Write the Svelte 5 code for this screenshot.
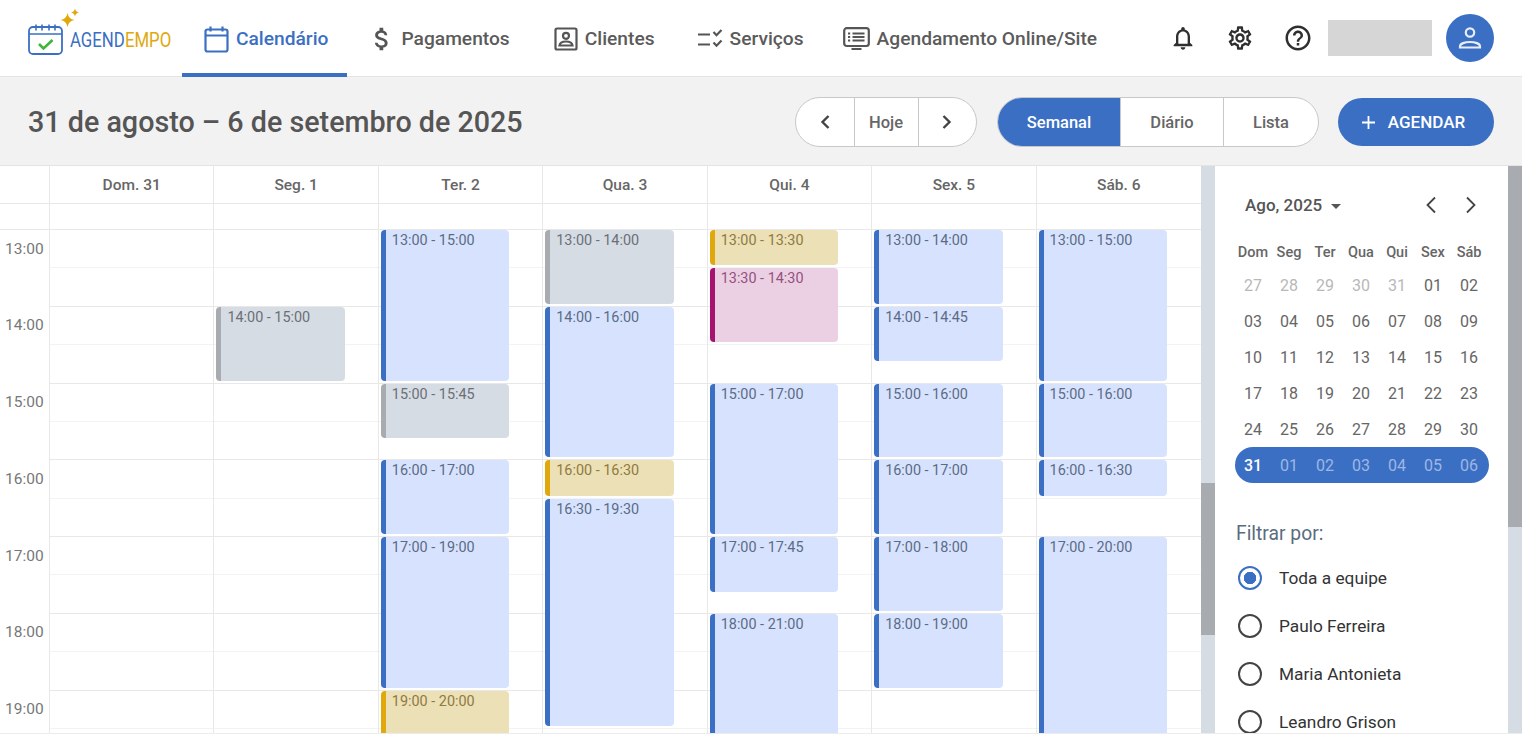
<script>
  const HOUR = 76.75

  const tabs = [
    { label: 'Calendário', icon: 'cal', w: 25, active: true },
    { label: 'Pagamentos', icon: 'money', w: 22 },
    { label: 'Clientes', icon: 'client', w: 24 },
    { label: 'Serviços', icon: 'check', w: 26 },
    { label: 'Agendamento Online/Site', icon: 'screen', w: 27 }
  ]

  const hours = [13, 14, 15, 16, 17, 18, 19]

  const days = [
    { title: 'Dom. 31', events: [] },
    { title: 'Seg. 1', events: [['14:00', '15:00', 'gray']] },
    { title: 'Ter. 2', events: [['13:00', '15:00', 'blue'], ['15:00', '15:45', 'gray'], ['16:00', '17:00', 'blue'], ['17:00', '19:00', 'blue'], ['19:00', '20:00', 'yellow']] },
    { title: 'Qua. 3', events: [['13:00', '14:00', 'gray'], ['14:00', '16:00', 'blue'], ['16:00', '16:30', 'yellow'], ['16:30', '19:30', 'blue']] },
    { title: 'Qui. 4', events: [['13:00', '13:30', 'yellow'], ['13:30', '14:30', 'pink'], ['15:00', '17:00', 'blue'], ['17:00', '17:45', 'blue'], ['18:00', '21:00', 'blue']] },
    { title: 'Sex. 5', events: [['13:00', '14:00', 'blue'], ['14:00', '14:45', 'blue'], ['15:00', '16:00', 'blue'], ['16:00', '17:00', 'blue'], ['17:00', '18:00', 'blue'], ['18:00', '19:00', 'blue']] },
    { title: 'Sáb. 6', events: [['13:00', '15:00', 'blue'], ['15:00', '16:00', 'blue'], ['16:00', '16:30', 'blue'], ['17:00', '20:00', 'blue']] }
  ]

  const toHours = (t) => {
    const [h, m] = t.split(':').map(Number)
    return h + m / 60
  }
  const topOf = (e) => (toHours(e[0]) - 13) * HOUR + 26
  const heightOf = (e) => (toHours(e[1]) - toHours(e[0])) * HOUR - 3

  const weekNames = ['Dom', 'Seg', 'Ter', 'Qua', 'Qui', 'Sex', 'Sáb']
  const weeks = [
    ['27', '28', '29', '30', '31', '01', '02'],
    ['03', '04', '05', '06', '07', '08', '09'],
    ['10', '11', '12', '13', '14', '15', '16'],
    ['17', '18', '19', '20', '21', '22', '23'],
    ['24', '25', '26', '27', '28', '29', '30']
  ]
  const currentWeek = ['31', '01', '02', '03', '04', '05', '06']

  const team = ['Toda a equipe', 'Paulo Ferreira', 'Maria Antonieta', 'Leandro Grison']
</script>

<div class="page">
  <header class="topbar">
    <div class="logo">
      <svg class="logo-mark" width="36" height="34" viewBox="0 0 36 34" fill="none">
        <rect x="1" y="5" width="33" height="27" rx="4" stroke="#3b6fc4" stroke-width="1.8" />
        <path d="M1 12h33M8 2.5v6M14 2.5v6M21 2.5v6M27 2.5v6" stroke="#3b6fc4" stroke-width="1.6" />
        <path d="M11 22l4.5 4.5 9-8.5" stroke="#3fb53c" stroke-width="2.6" />
      </svg>
      <svg class="sparkles" width="22" height="20" viewBox="0 0 22 20" fill="#e0a80c">
        <path d="M9.500 5Q10.500 11 16.500 12 10.500 13 9.500 19 8.500 13 2.500 12 8.500 11 9.500 5z" />
        <path d="M17 .5Q17.600 3.900 21 4.500 17.600 5.100 17 8.500 16.400 5.100 13 4.500 16.400 3.900 17 .5z" />
      </svg>
      <span class="logo-text"><span class="logo-a">AGEND</span><span class="logo-b">EMPO</span></span>
    </div>

    <nav class="tabs">
      {#each tabs as tab}
        <div class="tab" class:active={tab.active}>
          <span class="tab-icon" style="width:{tab.w}px">
            {#if tab.icon === 'cal'}
              <svg width="25" height="27" viewBox="0 0 25 27" fill="none" stroke="#3b6fc4" stroke-width="2.200">
                <rect x="1.500" y="3.500" width="22" height="22" rx="2" />
                <path d="M1.500 9.500h22M6.500 0.500v5M18.500 0.500v5" />
              </svg>
            {:else if tab.icon === 'money'}
              <svg class="dollar" width="30" height="30" viewBox="0 0 24 24" fill="#555"><path d="M11.800 10.900c-2.270-.59-3-1.200-3-2.150 0-1.090 1.010-1.850 2.700-1.850 1.780 0 2.440.85 2.500 2.100h2.210c-.07-1.720-1.120-3.300-3.210-3.810V3h-3v2.160c-1.940.42-3.500 1.680-3.500 3.610 0 2.310 1.910 3.460 4.700 4.130 2.500.6 3 1.480 3 2.410 0 .69-.49 1.790-2.700 1.790-2.060 0-2.870-.92-2.980-2.100h-2.200c.12 2.190 1.760 3.420 3.680 3.830V21h3v-2.150c1.950-.37 3.500-1.500 3.500-3.550 0-2.840-2.430-3.810-4.700-4.400z" /></svg>
            {:else if tab.icon === 'client'}
              <svg width="24" height="24" viewBox="0 0 24 24" fill="none" stroke="#555" stroke-width="2.200">
                <rect x="1.500" y="1.500" width="21" height="21" rx="1.500" />
                <circle cx="12" cy="8.800" r="3" />
                <path d="M5.500 18.500c.4-3 3.200-4 6.500-4s6.100 1 6.500 4z" />
              </svg>
            {:else if tab.icon === 'check'}
              <svg width="26" height="20" viewBox="0 0 26 20" fill="none" stroke="#555" stroke-width="2.200">
                <path d="M1 5.500h12M1 15.500h12M16.500 3l3 3.200 5-5.200M16.500 13.500l3 3.200 5-5.200" />
              </svg>
            {:else}
              <svg width="27" height="24" viewBox="0 0 27 24" fill="none" stroke="#555" stroke-width="2.200">
                <rect x="1.200" y="1.200" width="24.600" height="17.800" rx="2.500" />
                <path d="M9.500 6.500h12M9.500 10h12M9.500 13.500h12M5 6.500h2.200M5 10h2.200M5 13.500h2.200M8.500 22h10" />
              </svg>
            {/if}
          </span>
          <span>{tab.label}</span>
        </div>
      {/each}
    </nav>

    <div class="actions">
      <svg class="action" width="28" height="28" viewBox="0 0 24 24" fill="#2f2f2f"><path d="M12 22c1.100 0 2-.9 2-2h-4c0 1.100.9 2 2 2zm6-6v-5c0-3.070-1.630-5.640-4.500-6.320V4c0-.83-.67-1.500-1.500-1.500s-1.500.67-1.500 1.500v.68C7.640 5.360 6 7.920 6 11v5l-2 2v1h16v-1l-2-2zm-2 1H8v-6c0-2.480 1.510-4.500 4-4.500s4 2.020 4 4.500v6z" /></svg>
      <svg class="action" width="28" height="28" viewBox="0 0 24 24" fill="#2f2f2f"><path d="M19.430 12.980c.04-.32.07-.64.07-.98 0-.34-.03-.66-.07-.98l2.110-1.650c.19-.15.24-.42.12-.64l-2-3.460c-.09-.16-.26-.25-.44-.25-.06 0-.12.01-.17.03l-2.490 1c-.52-.4-1.080-.73-1.690-.98l-.38-2.650C14.460 2.180 14.250 2 14 2h-4c-.25 0-.46.18-.49.42l-.38 2.650c-.61.25-1.170.59-1.690.98l-2.490-1c-.06-.02-.12-.03-.18-.03-.17 0-.34.09-.43.25l-2 3.460c-.13.22-.07.49.12.64l2.110 1.650c-.04.32-.07.65-.07.98 0 .33.03.66.07.98l-2.110 1.650c-.19.15-.24.42-.12.64l2 3.460c.09.16.26.25.44.25.06 0 .12-.01.17-.03l2.490-1c.52.4 1.080.73 1.690.98l.38 2.650c.03.24.24.42.49.42h4c.25 0 .46-.18.49-.42l.38-2.650c.61-.25 1.170-.59 1.690-.98l2.490 1c.06.02.12.03.18.03.17 0 .34-.09.43-.25l2-3.460c.12-.22.07-.49-.12-.64l-2.110-1.650zm-1.980-1.710c.04.31.05.52.05.73 0 .21-.02.43-.05.73l-.14 1.130.89.7 1.080.84-.7 1.210-1.270-.51-1.040-.42-.9.68c-.43.32-.84.56-1.250.73l-1.060.43-.16 1.130-.2 1.350h-1.400l-.19-1.350-.16-1.130-1.060-.43c-.43-.18-.83-.41-1.230-.71l-.91-.7-1.060.43-1.270.51-.7-1.210 1.080-.84.89-.7-.14-1.130c-.03-.31-.05-.54-.05-.74s.02-.43.05-.73l.14-1.130-.89-.7-1.080-.84.7-1.210 1.270.51 1.040.42.9-.68c.43-.32.84-.56 1.250-.73l1.060-.43.16-1.130.2-1.350h1.390l.19 1.350.16 1.130 1.060.43c.43.18.83.41 1.230.71l.91.7 1.060-.43 1.270-.51.7 1.210-1.070.85-.89.7.14 1.130zM12 8c-2.210 0-4 1.790-4 4s1.790 4 4 4 4-1.790 4-4-1.790-4-4-4zm0 6c-1.100 0-2-.9-2-2s.9-2 2-2 2 .9 2 2-.9 2-2 2z" /></svg>
      <svg class="action" width="30" height="30" viewBox="0 0 24 24" fill="#2f2f2f"><path d="M11 18h2v-2h-2v2zm1-16C6.480 2 2 6.480 2 12s4.480 10 10 10 10-4.480 10-10S17.520 2 12 2zm0 18c-4.410 0-8-3.590-8-8s3.590-8 8-8 8 3.590 8 8-3.590 8-8 8zm0-14c-2.210 0-4 1.790-4 4h2c0-1.100.9-2 2-2s2 .9 2 2c0 2-3 1.750-3 5h2c0-2.250 3-2.500 3-5 0-2.210-1.790-4-4-4z" /></svg>
      <div class="name-box"></div>
      <div class="avatar">
        <svg width="26" height="26" viewBox="0 0 26 26" fill="none" stroke="#e8eef9" stroke-width="2.200">
          <circle cx="13" cy="7.500" r="4.200" />
          <path d="M3 22.500v-1c0-3 5-4.500 10-4.500s10 1.500 10 4.500v1z" />
        </svg>
      </div>
    </div>
  </header>

  <section class="toolbar">
    <h1>31 de agosto – 6 de setembro de 2025</h1>
    <div class="pager">
      <button class="arrow">
        <svg width="12" height="16" viewBox="0 0 12 16" fill="none" stroke="#444" stroke-width="2.400"><path d="M9.500 2L3.500 8l6 6" /></svg>
      </button>
      <button class="today">Hoje</button>
      <button class="arrow">
        <svg width="12" height="16" viewBox="0 0 12 16" fill="none" stroke="#444" stroke-width="2.400"><path d="M2.500 2l6 6-6 6" /></svg>
      </button>
    </div>
    <div class="views">
      <button class="view selected" style="width:122px">Semanal</button>
      <button class="view" style="width:103px">Diário</button>
      <button class="view" style="width:95px">Lista</button>
    </div>
    <button class="add">
      <svg width="15" height="15" viewBox="0 0 15 15" stroke="#fff" stroke-width="1.800"><path d="M7.500 1v13M1 7.500h13" /></svg>
      AGENDAR
    </button>
  </section>

  <main class="content">
    <div class="calendar">
      <div class="day-heads">
        <div class="corner"></div>
        {#each days as day}
          <div class="day-head">{day.title}</div>
        {/each}
      </div>
      <div class="grid">
        <div class="times">
          <div class="allday"></div>
          {#each hours as h}
            <div class="time">{h}:00</div>
          {/each}
        </div>
        {#each days as day}
          <div class="day">
            <div class="allday"></div>
            {#each hours as h}
              <div class="slot"></div>
              <div class="slot hour"></div>
            {/each}
            {#each day.events as ev}
              <div class="event {ev[2]}" style="top:{topOf(ev)}px;height:{heightOf(ev)}px">{ev[0]} - {ev[1]}</div>
            {/each}
          </div>
        {/each}
      </div>
    </div>

    <div class="scrollbar"><div class="thumb" style="margin-top:317px;height:152px"></div></div>

    <aside class="side">
      <div class="month-row">
        <span class="month">Ago, 2025</span>
        <span class="caret"></span>
        <svg class="month-prev" width="14" height="20" viewBox="0 0 14 20" fill="none" stroke="#444" stroke-width="1.800"><path d="M11 2.500L3.500 10l7.500 7.500" /></svg>
        <svg class="month-next" width="14" height="20" viewBox="0 0 14 20" fill="none" stroke="#444" stroke-width="1.800"><path d="M3 2.500L10.500 10 3 17.500" /></svg>
      </div>

      <div class="week names">
        {#each weekNames as n}<span>{n}</span>{/each}
      </div>
      {#each weeks as week, w}
        <div class="week">
          {#each week as d, i}
            <span class:muted={w === 0 && i < 5}>{d}</span>
          {/each}
        </div>
      {/each}
      <div class="week current">
        {#each currentWeek as d, i}
          <span class:first={i === 0}>{d}</span>
        {/each}
      </div>

      <div class="filter-title">Filtrar por:</div>
      {#each team as person, i}
        <div class="radio-row">
          <span class="radio" class:on={i === 0}></span>
          <span>{person}</span>
        </div>
      {/each}
    </aside>

    <div class="scrollbar"><div class="thumb" style="height:361px"></div></div>
  </main>
</div>

<style>
  :global(body) {
    margin: 0;
    overflow: hidden;
    background: #fff;
    font-family: Roboto, "Liberation Sans", sans-serif;
  }

  .page {
    width: 1522px;
    height: 736px;
    overflow: hidden;
    display: flex;
    flex-direction: column;
  }

  /* top bar */
  .topbar {
    height: 77px;
    flex: none;
    display: flex;
    align-items: stretch;
    box-sizing: border-box;
    padding-left: 28px;
    background: #fff;
    border-bottom: 1px solid #e4e4e4;
  }

  .logo {
    position: relative;
    width: 154px;
    flex: none;
    display: flex;
    align-items: center;
  }

  .logo-mark {
    flex: none;
    margin-top: 1px;
  }

  .sparkles {
    position: absolute;
    left: 30px;
    top: 8px;
  }

  .logo-text {
    display: inline-block;
    margin: 3px 0 0 6px;
    font-size: 21px;
    white-space: nowrap;
    transform: scaleX(0.8);
    transform-origin: 0 50%;
  }

  .logo-a { color: #3b6fc4; }
  .logo-b { color: #e0a80c; }

  .tabs {
    display: flex;
    align-items: stretch;
  }

  .tab {
    display: flex;
    align-items: center;
    gap: 7px;
    padding: 4px 20px 0 22px;
    font-size: 19.2px;
    font-weight: 500;
    color: #5b5b5b;
    white-space: nowrap;
    margin-bottom: -1px;
    border-bottom: 4px solid transparent;
    box-sizing: border-box;
  }

  .tab:first-child { padding-right: 19px; }
  .tab:nth-child(2) { gap: 10px; }
  .tab:nth-child(3) { margin-left: 2px; }
  .tab:nth-child(5) { margin-left: -3px; }

  .tab.active {
    color: #3b6fc4;
    border-bottom-color: #3b6fc4;
  }

  .tab-icon {
    display: flex;
    justify-content: center;
    flex: none;
    margin-top: 1px;
  }

  .dollar { flex: none; margin: -1px -6px 0 -2px; }

  .actions {
    margin-left: auto;
    padding-right: 28px;
    display: flex;
    align-items: center;
  }

  .action { margin-right: 29px; flex: none; }
  .action:nth-child(3) { margin-right: 15px; }

  .name-box {
    width: 104px;
    height: 36px;
    margin-right: 14px;
    margin-top: -1px;
    background: #d6d6d6;
  }

  .avatar {
    width: 48px;
    height: 48px;
    margin-top: -1px;
    border-radius: 50%;
    background: #3b6fc4;
    display: flex;
    align-items: center;
    justify-content: center;
  }

  /* toolbar */
  .toolbar {
    height: 89px;
    flex: none;
    display: flex;
    align-items: center;
    padding: 2px 28px 0;
    box-sizing: border-box;
    background: #f2f2f2;
    border-bottom: 1px solid #e4e4e4;
  }

  h1 {
    margin: 0 auto 0 0;
    font-size: 28.7px;
    font-weight: 500;
    color: #555;
    white-space: nowrap;
  }

  button {
    font-family: inherit;
    border: none;
    padding: 0;
    background: none;
  }

  .pager, .views {
    display: flex;
    height: 50px;
    box-sizing: border-box;
    background: #fff;
    border: 1px solid #c8c8c8;
    border-radius: 25px;
    overflow: hidden;
  }

  .pager { width: 182px; margin-right: 20px; }
  .views { width: 322px; margin-right: 19px; }

  .arrow {
    flex: 1;
    display: flex;
    align-items: center;
    justify-content: center;
  }

  .today {
    width: 65px;
    flex: none;
    border-left: 1px solid #c8c8c8;
    border-right: 1px solid #c8c8c8;
    font-size: 16.5px;
    font-weight: 500;
    color: #666;
  }

  .view {
    flex: none;
    font-size: 16.5px;
    font-weight: 500;
    color: #666;
    border-left: 1px solid #c8c8c8;
  }

  .view:first-child { border-left: none; }
  .view.selected { background: #3b6fc4; color: #fff; }

  .add {
    width: 156px;
    height: 48px;
    display: flex;
    align-items: center;
    justify-content: center;
    gap: 12px;
    padding-right: 6px;
    border-radius: 24px;
    background: #3b6fc4;
    color: #fff;
    font-size: 17px;
    font-weight: 500;
  }

  /* calendar */
  .content {
    flex: 1;
    min-height: 0;
    display: flex;
    overflow: hidden;
    margin-bottom: 2px;
    border-bottom: 1px solid #ececec;
  }

  .calendar {
    width: 1201px;
    flex: none;
    overflow: hidden;
    display: flex;
    flex-direction: column;
  }

  .day-heads, .grid {
    display: grid;
    grid-template-columns: 50px repeat(7, 1fr);
  }

  .day-heads {
    height: 38px;
    flex: none;
    box-sizing: border-box;
    border-bottom: 1px solid #e8e8e8;
  }

  .corner, .day-head, .times, .day {
    border-right: 1px solid #e8e8e8;
    box-sizing: border-box;
  }

  .corner { width: 50px; }

  .day-head {
    min-width: 0;
    display: flex;
    align-items: center;
    justify-content: center;
    padding-top: 1px;
    font-size: 15.5px;
    font-weight: 500;
    color: #666;
  }

  .day-head:last-child, .day:last-child { border-right: none; }

  .times { width: 50px; }

  .allday {
    height: 26px;
    box-sizing: border-box;
    border-bottom: 1px solid #e8e8e8;
  }

  .time {
    height: 76.75px;
    box-sizing: border-box;
    padding: 9.5px 0 0 5px;
    font-size: 15.5px;
    color: #777;
  }

  .day {
    position: relative;
    min-width: 0;
  }

  .slot {
    height: 38.375px;
    box-sizing: border-box;
    border-bottom: 1px solid #f3f3f3;
  }

  .slot.hour { border-bottom-color: #e8e8e8; }

  .event {
    position: absolute;
    left: 2px;
    width: 128.5px;
    box-sizing: border-box;
    padding: 2px 0 0 6px;
    border-left: 5px solid;
    border-radius: 4px;
    font-size: 14.4px;
    line-height: 17px;
    white-space: nowrap;
    overflow: hidden;
  }

  .blue { background: #d7e3fe; border-left-color: #3b6fc4; color: #5b6b85; }
  .gray { background: #d6dce4; border-left-color: #a8abb0; color: #6b6f76; }
  .yellow { background: #ece0b6; border-left-color: #e0a80c; color: #8f7a3f; }
  .pink { background: #ebd0e4; border-left-color: #a5126f; color: #94507f; }

  .scrollbar {
    width: 14px;
    flex: none;
    background: #d6dce4;
  }

  .thumb { background: #a8abb0; }

  /* side panel */
  .side {
    width: 293px;
    flex: none;
    box-sizing: border-box;
    padding: 0 19px 0 20px;
    background: #fff;
  }

  .month-row {
    position: relative;
    height: 74px;
    display: flex;
    align-items: center;
    padding: 4px 0 0 10px;
    box-sizing: border-box;
    color: #555;
  }

  .month {
    font-size: 17px;
    font-weight: 500;
  }

  .caret {
    margin-left: 9px;
    margin-top: 2px;
    border-left: 5px solid transparent;
    border-right: 5px solid transparent;
    border-top: 5px solid #555;
  }

  .month-prev { margin-left: auto; }
  .month-next { margin-left: 26px; margin-right: 11px; }

  .week {
    display: grid;
    grid-template-columns: repeat(7, 36px);
    height: 36px;
    align-items: center;
    justify-items: center;
    font-size: 16px;
    color: #666;
  }

  .week.names {
    height: 24px;
    margin-bottom: 3px;
    font-size: 14.5px;
    font-weight: 500;
  }

  .muted { color: #b8b8b8; }

  .week.current {
    width: 254px;
    background: #3b6fc4;
    border-radius: 18px;
    color: #9db7e2;
    font-size: 16px;
  }

  .week.current .first {
    color: #fff;
    font-weight: 500;
  }

  .filter-title {
    margin-top: 39px;
    padding-left: 1px;
    font-size: 19.3px;
    color: #5b6b80;
    line-height: 24px;
  }

  .radio-row {
    display: flex;
    align-items: center;
    gap: 17px;
    height: 48px;
    font-size: 17.3px;
    color: #333;
  }

  .filter-title + .radio-row { margin-top: 8px; }

  .radio {
    width: 24px;
    height: 24px;
    margin-left: 3px;
    flex: none;
    box-sizing: border-box;
    border: 2px solid #444;
    border-radius: 50%;
  }

  .radio.on {
    border-color: #3b6fc4;
    background: radial-gradient(circle, #3b6fc4 0 6px, #fff 6.5px);
  }
</style>
